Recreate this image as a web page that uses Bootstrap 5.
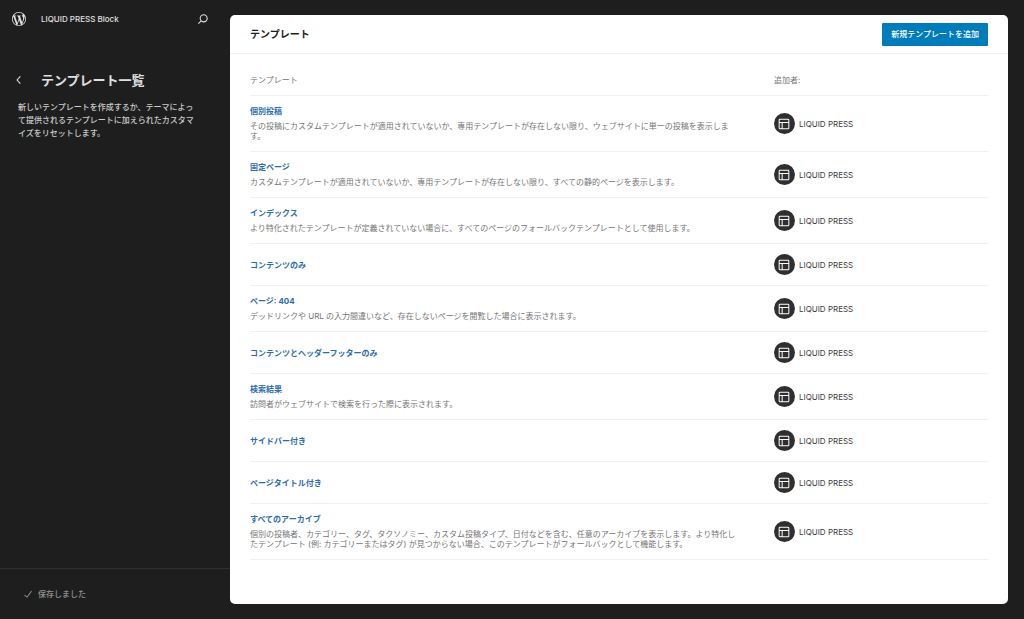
<!DOCTYPE html>
<html lang="ja">
<head>
<meta charset="utf-8">
<meta name="viewport" content="width=device-width, initial-scale=1">
<title>テンプレート</title>
<link href="https://cdn.jsdelivr.net/npm/bootstrap@5.3.0/dist/css/bootstrap.min.css" rel="stylesheet">
<style>
  body { background: #1e1e1e; font-family: Inter, "Noto Sans CJK JP", sans-serif; font-size: 8px; line-height: 10px; color: #757575; }
  svg { fill: currentColor; display: block; }
  .site-hub { height: 38px; padding-left: 12px; padding-right: 19px; color: #e0e0e0; }
  .site-title { font-weight: 500; margin-left: 15px; }
  .icon-btn { background: none; border: 0; padding: 0; color: inherit; }
  .side { width: 230px; color: #ccc; }
  .side-head { padding-left: 11px; margin-top: 32px; gap: 14px; color: #e0e0e0; }
  .side-head h1 { font-size: 13px; line-height: 20px; font-weight: 700; }
  .side-text { margin: 11px 34px 0 18px; line-height: 13px; font-weight: 500; color: #ccc; }
  .side-foot { border-top: 1px solid #2f2f2f; height: 52px; padding-left: 20px; padding-bottom: 2px; gap: 2px; color: #949494; font-weight: 500; }
  .panel { background: #fff; border-radius: 5px; margin: 15px 16px 16px 0; }
  .panel-head { height: 39px; padding: 0 20px; border-bottom: 1px solid #f0f0f0; }
  .panel-head h2 { font-size: 10px; line-height: 14px; font-weight: 700; color: #1e1e1e; }
  .btn-add { background: #007cba; color: #fff; border: 0; border-radius: 1px; font-size: 8px; line-height: 11px; font-weight: 500; padding: 6px 9px; }
  .btn-add:hover { background: #006ba1; color: #fff; }
  .panel-body { padding: 10px 20px 44px; }
  .tpl { width: 100%; table-layout: fixed; }
  .tpl th, .tpl td { border-bottom: 1px solid #f0f0f0; padding: 10px 0; vertical-align: middle; font-weight: 400; }
  .tpl thead th { padding: 11px 0 10px; }
  .tpl .c-name { width: 71%; padding-right: 37px; }
  .tpl a { color: #2c6cae; font-weight: 700; text-decoration: none; display: block; }
  .tpl p { margin: 5px 0 0; }
  .avatar { width: 21px; height: 21px; background: #2f2f2f; color: #fff; }
  .author { gap: 4px; color: #3c3c3c; }
</style>
</head>
<body>
<svg width="0" height="0" class="d-none" aria-hidden="true">
  <symbol id="layout" viewBox="0 0 24 24"><path d="M18 5.5H6a.5.5 0 00-.5.5v3h13V6a.5.5 0 00-.5-.5zm.5 5H10v8h8a.5.5 0 00.5-.5v-7.5zm-10 0h-3V18a.5.5 0 00.5.5h2.5v-8zM6 4h12a2 2 0 012 2v12a2 2 0 01-2 2H6a2 2 0 01-2-2V6a2 2 0 012-2z"/></symbol>
</svg>
<div class="d-flex flex-column flex-md-row min-vh-100">
  <aside class="side d-flex flex-column flex-shrink-0">
    <div class="site-hub d-flex align-items-center">
      <svg width="14" height="14" viewBox="0 0 20 20" aria-hidden="true"><path d="M20 10c0-5.51-4.49-10-10-10C4.48 0 0 4.49 0 10c0 5.52 4.48 10 10 10 5.51 0 10-4.48 10-10zM7.78 15.37L4.37 6.22c.55-.02 1.17-.08 1.17-.08.5-.06.44-1.13-.06-1.11 0 0-1.45.11-2.37.11-.18 0-.37 0-.58-.01C4.12 2.69 6.87 1.11 10 1.11c2.33 0 4.45.87 6.05 2.34-.68-.11-1.65.39-1.65 1.58 0 .74.45 1.36.9 2.1.35.61.55 1.36.55 2.46 0 1.49-1.4 5-1.4 5l-3.03-8.37c.54-.02.82-.17.82-.17.5-.05.44-1.25-.06-1.22 0 0-1.44.12-2.38.12-.87 0-2.33-.12-2.33-.12-.5-.03-.56 1.2-.06 1.22l.92.08 1.26 3.41zM17.41 10c.24-.64.74-1.87.43-4.25.7 1.29 1.05 2.71 1.05 4.25 0 3.29-1.73 6.24-4.4 7.78.97-2.59 1.94-5.2 2.92-7.78zM6.1 18.09C3.12 16.65 1.11 13.53 1.11 10c0-1.3.23-2.48.72-3.59C3.25 10.3 4.67 14.2 6.1 18.09zm4.03-6.63l2.58 6.98c-.86.29-1.76.45-2.71.45-.79 0-1.57-.11-2.29-.33.81-2.38 1.62-4.74 2.42-7.1z"/></svg>
      <span class="site-title">LIQUID PRESS Block</span>
      <button type="button" class="icon-btn ms-auto" aria-label="検索"><svg width="16" height="16" viewBox="0 0 24 24"><path d="M13 5c-3.3 0-6 2.7-6 6 0 1.4.5 2.7 1.3 3.7l-3.8 3.8 1.1 1.1 3.8-3.8c1 .8 2.3 1.3 3.7 1.3 3.3 0 6-2.7 6-6S16.3 5 13 5zm0 10.5c-2.5 0-4.5-2-4.5-4.5s2-4.5 4.5-4.5 4.5 2 4.5 4.5-2 4.5-4.5 4.5z"/></svg></button>
    </div>
    <div class="side-head d-flex align-items-center">
      <button type="button" class="icon-btn" aria-label="戻る"><svg width="16" height="16" viewBox="0 0 24 24"><path d="M14.6 7l-1.2-1L8 12l5.4 6 1.2-1-4.6-5z"/></svg></button>
      <h1 class="mb-0">テンプレート一覧</h1>
    </div>
    <p class="side-text">新しいテンプレートを作成するか、テーマによって提供されるテンプレートに加えられたカスタマイズをリセットします。</p>
    <div class="side-foot d-flex align-items-center mt-auto">
      <svg width="16" height="16" viewBox="0 0 24 24" aria-hidden="true"><path d="M16.7 7.1l-6.3 8.5-3.3-2.5-.9 1.2 4.5 3.4L17.9 8z"/></svg>
      <span>保存しました</span>
    </div>
  </aside>
  <main class="panel flex-grow-1">
    <header class="panel-head d-flex align-items-center justify-content-between">
      <h2 class="mb-0">テンプレート</h2>
      <button type="button" class="btn btn-add">新規テンプレートを追加</button>
    </header>
    <div class="panel-body">
      <table class="tpl">
        <thead><tr><th scope="col" class="c-name">テンプレート</th><th scope="col">追加者:</th></tr></thead>
        <tbody>
          <tr><td class="c-name"><a href="#">個別投稿</a><p>その投稿にカスタムテンプレートが適用されていないか、専用テンプレートが存在しない限り、ウェブサイトに単一の投稿を表示します。</p></td><td><div class="author d-flex align-items-center"><span class="avatar rounded-circle d-flex align-items-center justify-content-center"><svg width="16" height="16"><use href="#layout"/></svg></span>LIQUID PRESS</div></td></tr>
          <tr><td class="c-name"><a href="#">固定ページ</a><p>カスタムテンプレートが適用されていないか、専用テンプレートが存在しない限り、すべての静的ページを表示します。</p></td><td><div class="author d-flex align-items-center"><span class="avatar rounded-circle d-flex align-items-center justify-content-center"><svg width="16" height="16"><use href="#layout"/></svg></span>LIQUID PRESS</div></td></tr>
          <tr><td class="c-name"><a href="#">インデックス</a><p>より特化されたテンプレートが定義されていない場合に、すべてのページのフォールバックテンプレートとして使用します。</p></td><td><div class="author d-flex align-items-center"><span class="avatar rounded-circle d-flex align-items-center justify-content-center"><svg width="16" height="16"><use href="#layout"/></svg></span>LIQUID PRESS</div></td></tr>
          <tr><td class="c-name"><a href="#">コンテンツのみ</a></td><td><div class="author d-flex align-items-center"><span class="avatar rounded-circle d-flex align-items-center justify-content-center"><svg width="16" height="16"><use href="#layout"/></svg></span>LIQUID PRESS</div></td></tr>
          <tr><td class="c-name"><a href="#">ページ: 404</a><p>デッドリンクや URL の入力間違いなど、存在しないページを閲覧した場合に表示されます。</p></td><td><div class="author d-flex align-items-center"><span class="avatar rounded-circle d-flex align-items-center justify-content-center"><svg width="16" height="16"><use href="#layout"/></svg></span>LIQUID PRESS</div></td></tr>
          <tr><td class="c-name"><a href="#">コンテンツとヘッダーフッターのみ</a></td><td><div class="author d-flex align-items-center"><span class="avatar rounded-circle d-flex align-items-center justify-content-center"><svg width="16" height="16"><use href="#layout"/></svg></span>LIQUID PRESS</div></td></tr>
          <tr><td class="c-name"><a href="#">検索結果</a><p>訪問者がウェブサイトで検索を行った際に表示されます。</p></td><td><div class="author d-flex align-items-center"><span class="avatar rounded-circle d-flex align-items-center justify-content-center"><svg width="16" height="16"><use href="#layout"/></svg></span>LIQUID PRESS</div></td></tr>
          <tr><td class="c-name"><a href="#">サイドバー付き</a></td><td><div class="author d-flex align-items-center"><span class="avatar rounded-circle d-flex align-items-center justify-content-center"><svg width="16" height="16"><use href="#layout"/></svg></span>LIQUID PRESS</div></td></tr>
          <tr><td class="c-name"><a href="#">ページタイトル付き</a></td><td><div class="author d-flex align-items-center"><span class="avatar rounded-circle d-flex align-items-center justify-content-center"><svg width="16" height="16"><use href="#layout"/></svg></span>LIQUID PRESS</div></td></tr>
          <tr><td class="c-name"><a href="#">すべてのアーカイブ</a><p>個別の投稿者、カテゴリー、タグ、タクソノミー、カスタム投稿タイプ、日付などを含む、任意のアーカイブを表示します。より特化したテンプレート (例: カテゴリーまたはタグ) が見つからない場合、このテンプレートがフォールバックとして機能します。</p></td><td><div class="author d-flex align-items-center"><span class="avatar rounded-circle d-flex align-items-center justify-content-center"><svg width="16" height="16"><use href="#layout"/></svg></span>LIQUID PRESS</div></td></tr>
        </tbody>
      </table>
    </div>
  </main>
</div>
<script src="https://cdn.jsdelivr.net/npm/bootstrap@5.3.0/dist/js/bootstrap.bundle.min.js"></script>
</body>
</html>
